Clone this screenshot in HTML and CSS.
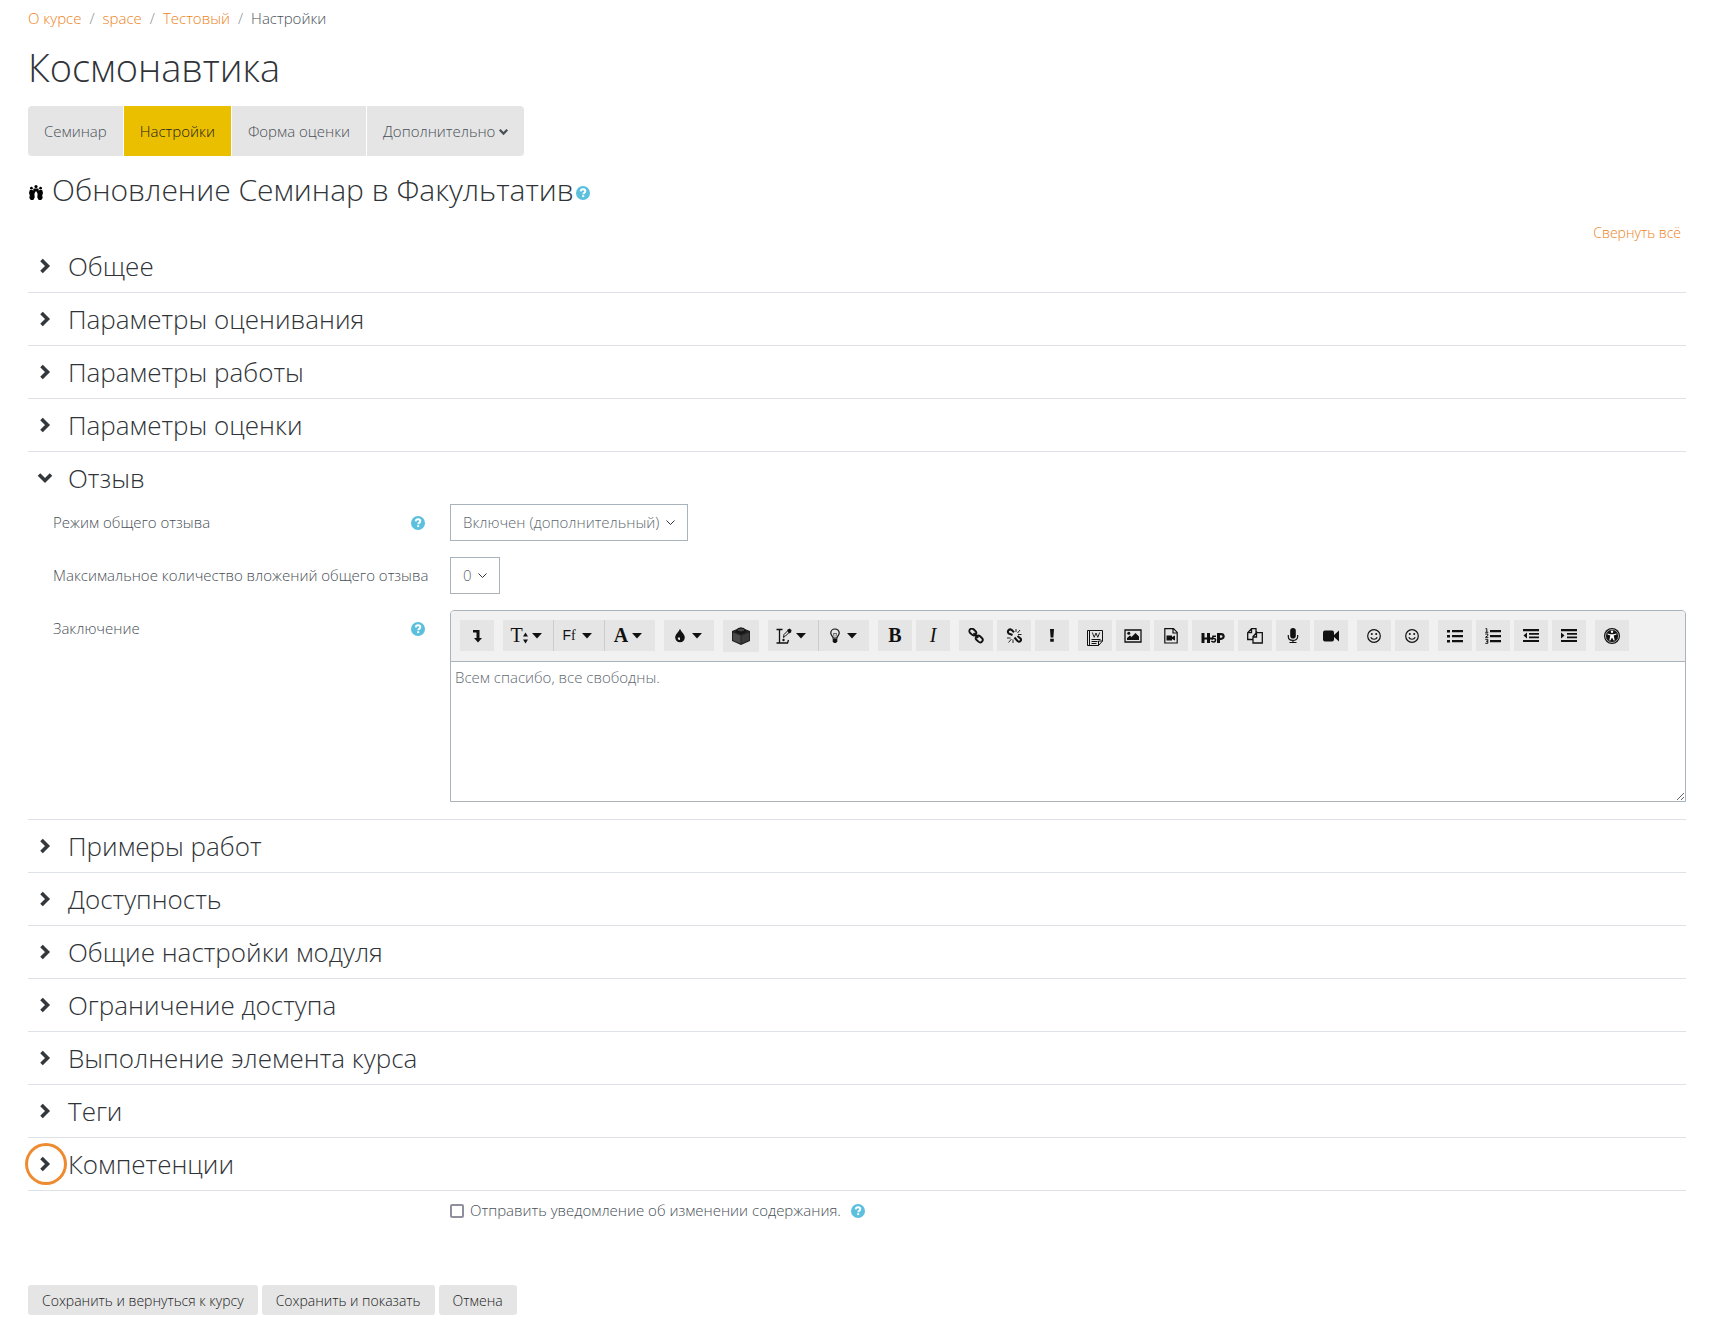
FILE: index.html
```html
<!DOCTYPE html>
<html lang="ru">
<head>
  <meta charset="UTF-8">
  <meta name="viewport" content="width=device-width, initial-scale=1.0">
  <title>Космонавтика: Настройки</title>
  <link rel="stylesheet" href="styles.css">
</head>
<body>
  <!-- Shared icons -->
  <svg class="sprite" aria-hidden="true">
    <symbol id="chevron" viewBox="0 0 12 16"><path d="M2.5 2l6 6-6 6" fill="none" stroke="currentColor" stroke-width="3.6"/></symbol>
    <symbol id="help" viewBox="0 0 14 14"><circle cx="7" cy="7" r="7" fill="#5bc0de"/><path d="M4.7 5.3C4.9 3.9 5.8 3.3 7 3.3c1.3 0 2.3.8 2.3 1.9 0 1.5-2 1.6-2 3" fill="none" stroke="#fff" stroke-width="1.9"/><path d="M6.2 9.2h2v1.9h-2z" fill="#fff"/></symbol>
    <symbol id="caret" viewBox="0 0 10 6"><path d="M0 0h10L5 5.5z" fill="currentColor"/></symbol>
    <symbol id="smile" viewBox="0 0 16 16"><circle cx="8" cy="8" r="6.3" fill="none" stroke="currentColor" stroke-width="1.2"/><circle cx="5.8" cy="6" r="1" fill="currentColor"/><circle cx="10.2" cy="6" r="1" fill="currentColor"/><path d="M4.8 9.3c1 2.6 5.4 2.6 6.4 0" fill="none" stroke="currentColor" stroke-width="1.2"/></symbol>
  </svg>

  <nav>
    <ol class="breadcrumb">
      <li><a href="#">О курсе</a></li>
      <li><a href="#">space</a></li>
      <li><a href="#">Тестовый</a></li>
      <li>Настройки</li>
    </ol>
  </nav>

  <h1>Космонавтика</h1>

  <nav class="tabs">
    <a href="#">Семинар</a>
    <a href="#" class="active">Настройки</a>
    <a href="#">Форма оценки</a>
    <a href="#">Дополнительно <svg class="tab-arrow"><use href="#chevron"/></svg></a>
  </nav>

  <h2>
    <svg class="mod-icon" viewBox="0 0 14 15"><circle cx="2.4" cy="3.2" r="1.4"/><circle cx="7" cy="1.6" r="1.6"/><circle cx="11.6" cy="3.2" r="1.4"/><path d="M4.6 3.5h4.800l1 4.500-1.400 1L7 6 5 9 3.600 8z"/><path d="M.8 5h2.800l1.800 3.500.3 4L4.300 15H1.800L.3 13 .8 10.500 0 8zM13.200 5h-2.800L8.600 8.500l-.3 4L9.700 15h2.500l1.500-2-.5-2.500L14 8z"/></svg>
    Обновление Семинар в Факультатив<button type="button" class="help" aria-label="Справка"><svg><use href="#help"/></svg></button>
  </h2>

  <form>
    <div class="collapse-all"><a href="#">Свернуть всё</a></div>

    <section><h3><button type="button" class="toggle" aria-label="Общее"><svg><use href="#chevron"/></svg></button>Общее</h3></section>
    <section><h3><button type="button" class="toggle" aria-label="Параметры оценивания"><svg><use href="#chevron"/></svg></button>Параметры оценивания</h3></section>
    <section><h3><button type="button" class="toggle" aria-label="Параметры работы"><svg><use href="#chevron"/></svg></button>Параметры работы</h3></section>
    <section><h3><button type="button" class="toggle" aria-label="Параметры оценки"><svg><use href="#chevron"/></svg></button>Параметры оценки</h3></section>

    <section class="open">
      <h3><button type="button" class="toggle" aria-label="Отзыв"><svg><use href="#chevron"/></svg></button>Отзыв</h3>
      <div class="row">
        <div class="label"><label for="mode">Режим общего отзыва</label><button type="button" class="help" aria-label="Справка"><svg><use href="#help"/></svg></button></div>
        <div><select id="mode"><option>Включен (дополнительный)</option></select></div>
      </div>
      <div class="row">
        <div class="label"><label for="files">Максимальное количество вложений общего отзыва</label></div>
        <div><select id="files"><option>0</option></select></div>
      </div>
      <div class="row">
        <div class="label"><label for="conclusion">Заключение</label><button type="button" class="help" aria-label="Справка"><svg><use href="#help"/></svg></button></div>
        <div class="editor">
          <div class="toolbar">
            <div class="group">
              <button type="button" aria-label="Больше кнопок"><svg viewBox="0 0 16 16"><path d="M4 2h6.500v8H13l-4 4.500L5 10h2.500V4.500H4z"/></svg></button>
            </div>
            <div class="group joined">
              <button type="button" class="menu" aria-label="Размер"><span class="serif">T</span><svg class="updown" viewBox="0 0 5 12"><path d="M0 4.500h5L2.500.5zM0 7.500h5l-2.500 4z"/></svg><svg class="caret"><use href="#caret"/></svg></button>
              <button type="button" class="menu font-menu" aria-label="Шрифт"><span class="ff">F<span>f</span></span><svg class="caret"><use href="#caret"/></svg></button>
              <button type="button" class="menu" aria-label="Цвет"><b class="serif">A</b><svg class="caret"><use href="#caret"/></svg></button>
            </div>
            <div class="group">
              <button type="button" class="menu" aria-label="Фон"><svg viewBox="0 0 16 16"><path d="M8 .8c1 3 4.800 5.500 4.800 8.700a4.800 4.800 0 0 1-9.600 0C3.200 6.300 7 3.800 8 .8z"/><path d="M5.800 9.500c-.2 1.800.7 2.600 2.200 2.500V9.500z" fill="#e5e5e5"/></svg><svg class="caret"><use href="#caret"/></svg></button>
            </div>
            <div class="group">
              <button type="button" class="brick" aria-label="Компонент"><svg viewBox="0 0 20 20"><path d="M1 5l9-3.500L19 5v10l-9 4-9-4z" fill="#222"/><path d="M2 6.500l7.500 3v8L2 14.300z" fill="#4a4a4a"/><path d="M18 6.500l-7.500 3v8l7.500-3.200z" fill="#3a3a3a"/><ellipse cx="10" cy="4" rx="4" ry="2" fill="#444" stroke="#111"/><path d="M6 4v2c1.500 1.600 6.500 1.600 8 0V4" fill="none" stroke="#111"/></svg></button>
            </div>
            <div class="group joined">
              <button type="button" class="menu" aria-label="Стиль"><svg viewBox="0 0 16 16"><path d="M.5 1.500h6M3.500 1.500v13.500M.5 15h11l1-3" fill="none" stroke="currentColor" stroke-width="1.300"/><path d="M7.500 9.500l.5-3 4-4 1.500 1.500-4 4z" fill="none" stroke="currentColor" stroke-width="1"/><path d="M11 2l2.500-1.500 2 1.500-.5 2.500-2 1z"/><circle cx="7.500" cy="12" r="1.200"/></svg><svg class="caret"><use href="#caret"/></svg></button>
              <button type="button" class="menu" aria-label="Подсказка"><svg viewBox="0 0 16 16"><path d="M6 10c0-2-2.200-2.500-2.200-5a4.200 4 0 0 1 8.400 0c0 2.500-2.200 3-2.200 5z" fill="none" stroke="currentColor" stroke-width="1.200"/><path d="M7 8.500L6.500 5.500h3L9 8.500" fill="none" stroke="currentColor" stroke-width=".6"/><path d="M5.700 10.500h4.600v3L9 15H7l-1.300-1.500z"/></svg><svg class="caret"><use href="#caret"/></svg></button>
            </div>
            <div class="group">
              <button type="button" aria-label="Полужирный"><b class="serif">B</b></button>
              <button type="button" aria-label="Курсив"><i class="serif">I</i></button>
            </div>
            <div class="group">
              <button type="button" aria-label="Ссылка"><svg viewBox="0 0 16 16"><g fill="none" stroke="currentColor" stroke-width="1.900"><rect x="1" y="1.500" width="7.500" height="5" rx="2.500" transform="rotate(43 4.800 4)"/><rect x="7.500" y="8.500" width="7.500" height="5" rx="2.500" transform="rotate(43 11.300 11)"/><path d="M5.500 5.200l4.800 4.600"/></g></svg></button>
              <button type="button" aria-label="Удалить ссылку"><svg viewBox="0 0 16 16"><path d="M6.500 7L2.500 5.300C.8 3.300 3.300.4 5.500 1.800L8 4.300M8.500 9.500l3 3.500c2.500 1.800 4.500-.8 3-2.500L11.500 8" fill="none" stroke="currentColor" stroke-width="2"/><path d="M10 4V1M11.500 5L14 2M12 6.500h3.500M1 10h3.500M5.500 11L2.500 14.500M7 11.500V15" fill="none" stroke="currentColor" stroke-width=".9"/></svg></button>
              <button type="button" aria-label="Без автоссылки"><svg viewBox="0 0 16 16"><path d="M6 1h4l-.6 8.500H6.600zM6.200 10.800h3.600v3H6.200z"/></svg></button>
            </div>
            <div class="group">
              <button type="button" aria-label="Импорт Word"><svg class="word" viewBox="0 0 18 18"><path d="M3.500 1.500h13V12l-4 4.500h-11v-15h2M3.500 1.500v15M16.500 12h-4v4.500" fill="none" stroke="currentColor"/><path d="M5.500 10.500h9M5.500 12.500h6M5.500 14.500h5" stroke="currentColor"/><path d="M6.300 3.500l1.900 4.800L10 4l1.800 4.300 1.900-4.800" fill="none" stroke="currentColor" stroke-width=".9"/></svg></button>
              <button type="button" aria-label="Изображение"><svg class="image" viewBox="0 0 18 16"><path d="M1 2h16v12H1z" fill="none" stroke="currentColor" stroke-width="1.300"/><circle cx="4.800" cy="5.300" r="1.500"/><path d="M3 12V10l3-2.500 1.500 1.500L11.500 5 15 8.500V12z"/></svg></button>
              <button type="button" aria-label="Медиа"><svg viewBox="0 0 16 16"><path d="M1.800.7h8.700l3.700 3.700V15H1.800zM10 .7V5h4" fill="none" stroke="currentColor" stroke-width="1.200"/><path d="M3.500 7.500h5.500v1.500l3-1.500v5l-3-1.500v1.500H3.500z"/></svg></button>
              <button type="button" class="h5p" aria-label="H5P"><svg viewBox="0 0 24 12"><path d="M2 1v10M7.500 1v10M17.500 1v10" fill="none" stroke="currentColor" stroke-width="3"/><path d="M2 6.500h10M17.500 2.200h2.500c3.500 0 3.500 4.600 0 4.600h-2.500" fill="none" stroke="currentColor" stroke-width="2.200"/><path d="M15 4.200h-3L11.500 6.700c3-.6 3.500.8 2.800 2.300-.6 1-2.200 1.200-4 .2" fill="none" stroke="currentColor" stroke-width="1.500"/></svg></button>
              <button type="button" aria-label="Файлы"><svg viewBox="0 0 16 16"><path d="M4.500.7H9v4M6 11.500H.7V4.700L4.500.7v4H1M9.500 4.700h5.800V15H6V8.500l3.500-3.800V9H6" fill="none" stroke="currentColor" stroke-width="1.300"/></svg></button>
              <button type="button" aria-label="Аудио"><svg viewBox="0 0 16 16"><rect x="5.200" y="0" width="5.600" height="10.500" rx="2.800"/><path d="M3.300 7v1.500c0 5.200 9.400 5.200 9.400 0V7M8 12v2.500M4.500 14.500h7" fill="none" stroke="currentColor" stroke-width="1.200"/></svg></button>
              <button type="button" aria-label="Видео"><svg viewBox="0 0 16 16"><rect x="0" y="2.500" width="11" height="11" rx="2"/><path d="M10.500 7.500L16 2.500v11l-5.500-5z"/></svg></button>
            </div>
            <div class="group">
              <button type="button" aria-label="Эмодзи"><svg><use href="#smile"/></svg></button>
              <button type="button" aria-label="Смайлик"><svg><use href="#smile"/></svg></button>
            </div>
            <div class="group">
              <button type="button" aria-label="Маркированный список"><svg viewBox="0 0 16 16"><path d="M0 2h3v2.500H0zM0 7h3v2.500H0zM0 12h3v2.500H0zM5 2h11v2.300H5zM5 7h11v2.300H5zM5 12h11v2.300H5z"/></svg></button>
              <button type="button" aria-label="Нумерованный список"><svg viewBox="0 0 16 16"><path d="M5 2h11v2.300H5zM5 7h11v2.300H5zM5 12h11v2.300H5z"/><path d="M.5 .7h1.300V4M.3 4.300h3M.3 6h2.500v1.500L.5 9.300h2.800M.3 11.300h2.500v4H.3M1 13.200h2" fill="none" stroke="currentColor" stroke-width="1"/></svg></button>
              <button type="button" aria-label="Уменьшить отступ"><svg viewBox="0 0 16 16"><path d="M0 1h16v2.300H0zM6 5h10v1.800H6zM6 8.500h10v1.800H6zM0 12h16v2H0zM4 4.500v6L.5 7.500z"/></svg></button>
              <button type="button" aria-label="Увеличить отступ"><svg viewBox="0 0 16 16"><path d="M0 1h16v2.300H0zM6 5h10v1.800H6zM6 8.500h10v1.800H6zM0 12h16v2H0zM0 4.500v6l3.500-3z"/></svg></button>
            </div>
            <div class="group">
              <button type="button" aria-label="Проверка доступности"><svg viewBox="0 0 16 16"><circle cx="8" cy="8" r="8"/><circle cx="8" cy="8" r="6.500" fill="none" stroke="#e5e5e5" stroke-width=".7"/><circle cx="8" cy="3.800" r="1.200" fill="#fff"/><path d="M3.500 5.500l3 .8h3l3-.8v1L9.700 7.500l1 5h-1L8 9.500 6.300 12.500h-1l1-5-2.800-1z" fill="#fff"/></svg></button>
            </div>
          </div>
          <textarea id="conclusion">Всем спасибо, все свободны.</textarea>
        </div>
      </div>
    </section>

    <section><h3><button type="button" class="toggle" aria-label="Примеры работ"><svg><use href="#chevron"/></svg></button>Примеры работ</h3></section>
    <section><h3><button type="button" class="toggle" aria-label="Доступность"><svg><use href="#chevron"/></svg></button>Доступность</h3></section>
    <section><h3><button type="button" class="toggle" aria-label="Общие настройки модуля"><svg><use href="#chevron"/></svg></button>Общие настройки модуля</h3></section>
    <section><h3><button type="button" class="toggle" aria-label="Ограничение доступа"><svg><use href="#chevron"/></svg></button>Ограничение доступа</h3></section>
    <section><h3><button type="button" class="toggle" aria-label="Выполнение элемента курса"><svg><use href="#chevron"/></svg></button>Выполнение элемента курса</h3></section>
    <section><h3><button type="button" class="toggle" aria-label="Теги"><svg><use href="#chevron"/></svg></button>Теги</h3></section>
    <section><h3><button type="button" class="toggle focused" aria-label="Компетенции"><svg><use href="#chevron"/></svg></button>Компетенции</h3></section>

    <div class="row notify">
      <div></div>
      <div class="check">
        <input type="checkbox" id="notify">
        <label for="notify">Отправить уведомление об изменении содержания.</label>
        <button type="button" class="help" aria-label="Справка"><svg><use href="#help"/></svg></button>
      </div>
    </div>

    <div class="actions">
      <button type="submit">Сохранить и вернуться к курсу</button>
      <button type="submit">Сохранить и показать</button>
      <button type="button">Отмена</button>
    </div>
  </form>
</body>
</html>
```
FILE: styles.css
```css
* {
  box-sizing: border-box;
}

body {
  margin: 0;
  padding: 7px 41px 20px 28px;
  background: #fff;
  color: #495057;
  font-family: "Open Sans", sans-serif;
  font-size: 15px;
  font-weight: 300;
  line-height: 23px;
}

a {
  color: #ee8222;
  text-decoration: none;
}

b {
  font-weight: 700;
}

button {
  border: 0;
  padding: 0;
  background: none;
  color: inherit;
  font: inherit;
  cursor: pointer;
}

svg {
  fill: currentColor;
}

.sprite {
  display: none;
}

.breadcrumb {
  display: flex;
  margin: 0 0 14px;
  padding: 0;
  list-style: none;
}

.breadcrumb li + li::before {
  content: "/";
  padding: 0 8px;
  color: #868e96;
}

h1, h2, h3 {
  margin: 0;
  color: #303438;
  font-weight: 300;
}

h1 {
  font-size: 38px;
  line-height: 46px;
}

/* Module tabs */
.tabs {
  display: flex;
  gap: 1px;
  width: fit-content;
  margin: 16px 0;
  border-radius: 4px;
  overflow: hidden;
}

.tabs a {
  padding: 14px 16px 13px;
  background: #e5e5e5;
  color: #495057;
}

.tabs .active {
  background: #eabf00;
  color: #222;
}

.tab-arrow {
  width: 9px;
  height: 10px;
  transform: rotate(90deg);
}

h2 {
  display: flex;
  align-items: center;
  font-size: 30px;
  line-height: 36px;
}

.mod-icon {
  width: 16px;
  height: 15px;
  margin: 5px 8px 0 0;
  color: #000;
}

.help svg {
  display: block;
  width: 14px;
  height: 14px;
}

h2 .help {
  margin: 5px 0 0 2px;
}

.collapse-all {
  padding: 17px 5px 0;
  font-size: 14px;
  line-height: 15px;
  text-align: right;
}

/* Collapsible sections */
section {
  border-bottom: 1px solid #dee2e6;
}

h3 {
  display: flex;
  align-items: center;
  height: 52px;
  font-size: 26px;
  line-height: 32px;
}

.toggle {
  display: flex;
  align-items: center;
  justify-content: center;
  flex-shrink: 0;
  width: 42px;
  height: 42px;
  margin: 0 1px 0 -3px;
  padding-right: 2px;
  border-radius: 50%;
  color: #33383c;
}

.toggle svg {
  width: 12px;
  height: 16px;
}

.toggle.focused {
  box-shadow: inset 0 0 0 3px #ee8b31;
}

.open .toggle svg {
  transform: rotate(90deg);
}

.open {
  padding-bottom: 17px;
}

.row {
  display: grid;
  grid-template-columns: 397px 1fr;
  padding-left: 25px;
}

.row + .row {
  margin-top: 16px;
}

.label {
  display: flex;
  align-items: flex-start;
  justify-content: space-between;
  padding: 7px 25px 0 0;
  white-space: nowrap;
}

.label .help {
  padding-top: 5px;
}

select {
  display: block;
  appearance: none;
  height: 37px;
  padding: 0 27px 0 12px;
  border: 1px solid #a9b3bc;
  border-radius: 0;
  background: #fff url("data:image/svg+xml,%3Csvg xmlns='http://www.w3.org/2000/svg' viewBox='0 0 9 6'%3E%3Cpath d='M.5.5l4 4 4-4' fill='none' stroke='%23333'/%3E%3C/svg%3E") no-repeat right 12px center / 9px 6px;
  color: #60686f;
  font: inherit;
}

/* Text editor */
.editor {
  border: 1px solid #a9b3bc;
  border-radius: 4px 4px 0 0;
}

.toolbar {
  display: flex;
  flex-wrap: wrap;
  gap: 9px;
  padding: 9px;
  border-bottom: 1px solid #a9b3bc;
  border-radius: 3px 3px 0 0;
  background: #f1f1f1;
}

.group {
  display: flex;
  gap: 4px;
}

.joined {
  gap: 1px;
}

.joined button + button {
  box-shadow: -1px 0 #ccc;
}

.toolbar button {
  display: flex;
  align-items: center;
  justify-content: center;
  width: 34px;
  height: 31px;
  background: #e5e5e5;
  color: #111;
}

.toolbar svg {
  width: 16px;
  height: 16px;
}

.toolbar .menu {
  gap: 4px;
  width: 50px;
  padding-right: 4px;
}

.toolbar .caret {
  width: 10px;
  height: 6px;
}

.toolbar .updown {
  width: 5px;
  height: 12px;
  margin: 4px 0 0 -4px;
}

.toolbar .brick {
  width: 36px;
  height: 32px;
}

.brick svg {
  width: 20px;
  height: 20px;
}

.toolbar .h5p {
  width: 42px;
}

.toolbar .h5p svg {
  width: 24px;
  height: 12px;
  margin-top: 4px;
}

.toolbar .word,
.toolbar .image {
  width: 18px;
  height: 18px;
}

.toolbar .word {
  margin-top: 4px;
}

.serif {
  font-family: "Liberation Serif", serif;
  font-size: 20px;
}

.toolbar .font-menu {
  gap: 6px;
}

.ff {
  font-family: "Liberation Sans", sans-serif;
  font-size: 14px;
}

.ff span {
  font-family: "Liberation Serif", serif;
}

textarea {
  display: block;
  width: 100%;
  height: 139px;
  padding: 4px;
  border: 0;
  color: #60686f;
  font: inherit;
  resize: vertical;
}

.notify {
  padding-top: 8px;
}

.check {
  display: flex;
  align-items: center;
}

.check input {
  appearance: none;
  width: 14px;
  height: 14px;
  margin: 0 6px 0 0;
  border: 2px solid #8f8f9d;
  border-radius: 2px;
}

.check .help {
  margin-left: 10px;
}

.actions {
  display: flex;
  gap: 4px;
  margin-top: 63px;
}

.actions button {
  height: 30px;
  padding: 0 14px;
  border-radius: 3px;
  background: #e5e5e5;
  color: #222;
  font-size: 14px;
}
```
